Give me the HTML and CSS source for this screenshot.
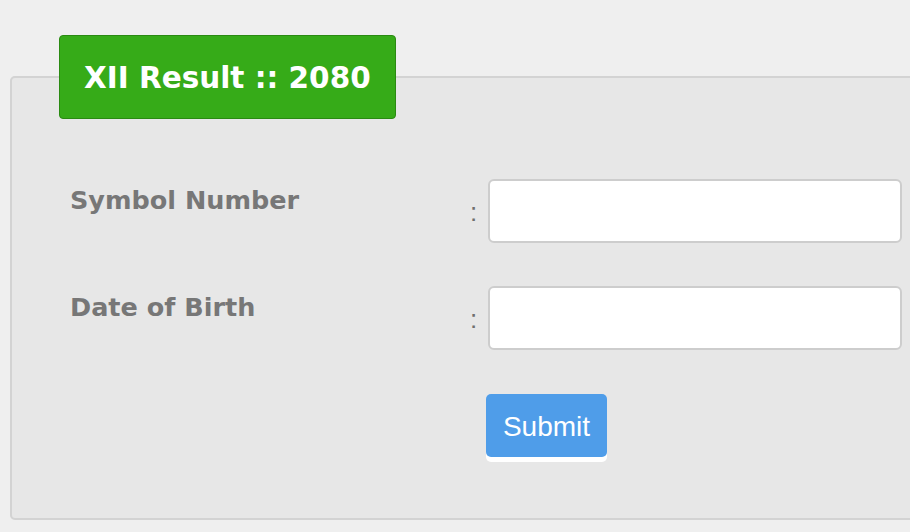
FILE: index.html
```html
<!DOCTYPE html>
<html lang="en">
<head>
  <meta charset="UTF-8" />
  <meta name="viewport" content="width=device-width, initial-scale=1.0" />
  <title>XII Result 2080</title>
  <link rel="stylesheet" href="styles.css">
</head>
<body>
  <div class="page">
    <form class="result-form" onsubmit="return false;">
      <fieldset class="box">
        <legend class="box-title">XII Result :: 2080</legend>

        <div class="row row-first">
          <label class="label" for="symbol">Symbol Number</label>
          <span class="colon">:</span>
          <input type="text" id="symbol" class="field" />
        </div>

        <div class="row row-second">
          <label class="label" for="dob">Date of Birth</label>
          <span class="colon">:</span>
          <input type="text" id="dob" class="field" />
        </div>

        <div class="row row-actions">
          <span></span>
          <span></span>
          <div><button type="submit" class="btn">Submit</button></div>
        </div>
      </fieldset>
    </form>
  </div>
</body>
</html>
```
FILE: styles.css
```css
html, body {
  margin: 0;
  padding: 0;
  background: #efefef;
  overflow: hidden;
}
.page {
  padding: 0 0 0 10px;
}
.result-form {
  width: 960px;
}
.box {
  margin: 35px 0 0 0;
  padding: 0 0 61px 0;
  border: 2px solid #d3d3d3;
  border-radius: 5px;
  background: #e7e7e7;
  min-width: 0;
}
.box-title {
  margin-left: 47px;
  padding: 25px 24px 23px;
  background: #36ab18;
  border: 1px solid #2a8a12;
  border-radius: 4px;
  color: #fff;
  font-family: "DejaVu Sans", Tahoma, sans-serif;
  font-weight: bold;
  font-size: 29.5px;
  line-height: 34px;
}
.row {
  display: grid;
  grid-template-columns: 400px 18px 414px;
  align-items: start;
  padding-left: 58px;
}
.row-first {
  margin-top: 60px;
}
.row-second {
  margin-top: 43px;
}
.row-actions {
  margin-top: 44px;
}
.label {
  padding-top: 6px;
  font-family: "DejaVu Sans", Tahoma, sans-serif;
  font-weight: bold;
  font-size: 25.5px;
  color: #777;
}
.colon {
  padding-top: 18px;
  font-family: "Liberation Sans", Arial, sans-serif;
  font-size: 26px;
  color: #6f6f6f;
}
.field {
  box-sizing: border-box;
  width: 414px;
  height: 64px;
  border: 2px solid #cdcdcd;
  border-radius: 6px;
  background: #fff;
  font-size: 22px;
}
.btn {
  margin-left: -2px;
  width: 121px;
  height: 63px;
  padding-top: 3px;
  border: none;
  border-radius: 5px;
  background: #4f9de9;
  color: #fff;
  font-family: "Liberation Sans", Arial, sans-serif;
  font-size: 28px;
  box-shadow: 0 5px 0 #fff;
}
```
